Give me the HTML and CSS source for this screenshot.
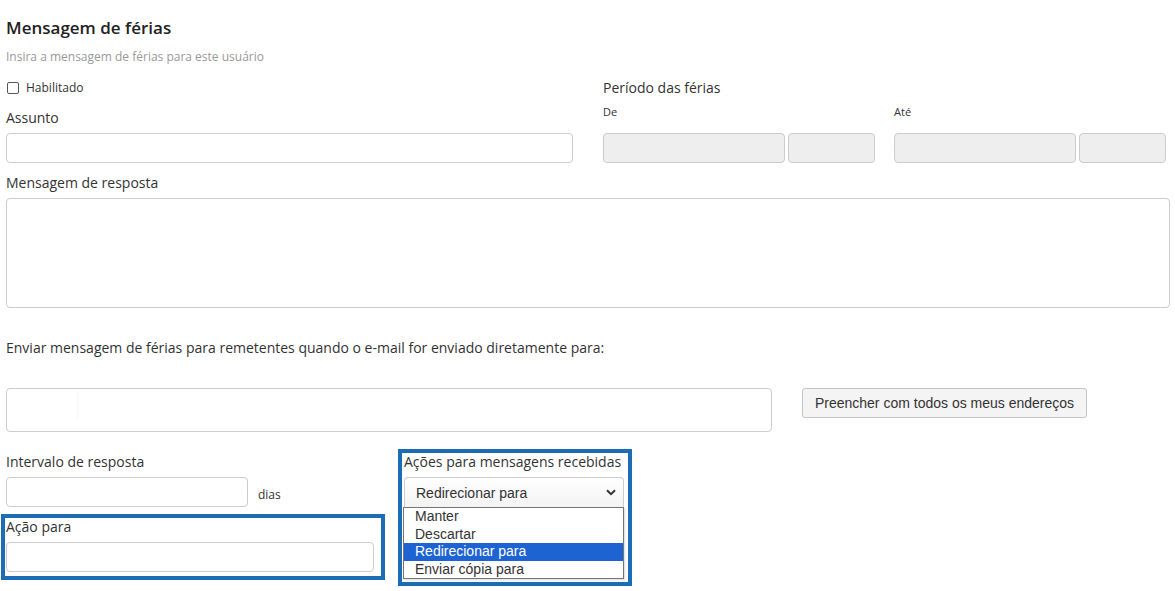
FILE: index.html
```html
<!DOCTYPE html>
<html lang="pt">
<head>
<meta charset="utf-8">
<title>Mensagem de férias</title>
<link rel="stylesheet" href="styles.css">
</head>
<body>
<div class="page">
  <h2 class="title">Mensagem de férias</h2>
  <p class="subtitle">Insira a mensagem de férias para este usuário</p>

  <div class="top-grid">
    <div class="col-left">
      <label class="check-row"><input type="checkbox" class="check"><span>Habilitado</span></label>
      <div class="label mt10">Assunto</div>
      <input class="field subject" type="text">
    </div>
    <div class="col-right">
      <div class="label">Período das férias</div>
      <div class="dates">
        <div class="date-group">
          <div class="small-label">De</div>
          <div class="date-inputs">
            <input class="field disabled date" type="text" disabled>
            <input class="field disabled time" type="text" disabled>
          </div>
        </div>
        <div class="date-group">
          <div class="small-label">Até</div>
          <div class="date-inputs">
            <input class="field disabled date" type="text" disabled>
            <input class="field disabled time" type="text" disabled>
          </div>
        </div>
      </div>
    </div>
  </div>

  <div class="label mt10">Mensagem de resposta</div>
  <textarea class="field message"></textarea>

  <div class="label send-label">Enviar mensagem de férias para remetentes quando o e-mail for enviado diretamente para:</div>
  <div class="address-row">
    <div class="field tags"><span class="tag-input"></span></div>
    <button class="fill-btn" type="button">Preencher com todos os meus endereços</button>
  </div>

  <div class="bottom-row">
    <div class="col-bottom-left">
      <div class="label interval-label">Intervalo de resposta</div>
      <div class="interval-row">
        <input class="field interval" type="text">
        <span class="unit">dias</span>
      </div>
      <div class="highlight action-box">
        <div class="label">Ação para</div>
        <input class="field action-input" type="text">
      </div>
    </div>
    <div class="highlight actions-box">
      <div class="label">Ações para mensagens recebidas</div>
      <div class="select">
        <span>Redirecionar para</span>
        <svg class="chev" width="10" height="7" viewBox="0 0 10 7"><path d="M1 1.2 L5 5.2 L9 1.2" fill="none" stroke="#333" stroke-width="2"/></svg>
      </div>
      <ul class="options">
        <li>Manter</li>
        <li>Descartar</li>
        <li class="selected">Redirecionar para</li>
        <li>Enviar cópia para</li>
      </ul>
    </div>
  </div>
</div>
</body>
</html>
```

FILE: styles.css
```css
* { box-sizing: border-box; }
html, body { margin: 0; padding: 0; background: #fff; }
body {
  font-family: "Open Sans", "Liberation Sans", sans-serif;
  color: #333;
}
.page {
  padding: 16px 5px 0 6px;
  width: 1175px;
}
.title {
  margin: 0;
  font-size: 17px;
  line-height: 24px;
  font-weight: 600;
  color: #222;
}
.subtitle {
  margin: 8px 0 0;
  font-size: 12px;
  line-height: 18px;
  color: #999;
}
.top-grid {
  display: grid;
  grid-template-columns: 567px 563px;
  column-gap: 30px;
  margin-top: 12px;
}
.col-left, .col-right { display: flex; flex-direction: column; }
.check-row {
  display: flex;
  align-items: center;
  gap: 7px;
  height: 19px;
  font-size: 12px;
  color: #333;
  padding-left: 1px;
}
.check {
  appearance: none;
  -webkit-appearance: none;
  width: 12px;
  height: 12px;
  margin: 0;
  border: 1px solid #555;
  border-radius: 2px;
  background: #fff;
}
.label {
  font-size: 14px;
  line-height: 20px;
  color: #333;
}
.mt10 { margin-top: 10px; }
.check-row + .label { margin-top: 11px; }
.field {
  display: block;
  border: 1px solid #ccc;
  border-radius: 4px;
  background: #fff;
  height: 30px;
  margin: 0;
  font: inherit;
}
.subject { width: 567px; margin-top: 5px; }
.dates {
  display: flex;
  gap: 19px;
  margin-top: 6px;
}
.date-group { width: 272px; }
.small-label {
  font-size: 11px;
  line-height: 16px;
  color: #333;
}
.date-inputs {
  display: flex;
  gap: 3px;
  margin-top: 13px;
}
.field.disabled { background: #eee; }
.date { width: 182px; }
.time { width: 87px; }
.message {
  width: 1164px;
  height: 110px;
  margin-top: 5px;
  resize: none;
}
.send-label { margin-top: 30px; }
.address-row {
  display: flex;
  align-items: flex-start;
  gap: 30px;
  margin-top: 30px;
}
.tags {
  width: 766px;
  height: 44px;
  padding: 1px 0 0 0;
}
.tag-input {
  display: block;
  width: 71px;
  height: 31px;
  border-right: 1px solid #f8f8f8;
  border-radius: 4px 0 0 0;
}
.fill-btn {
  height: 30px;
  width: 285px;
  padding: 0;
  border: 1px solid #c4c4c4;
  border-radius: 3px;
  background: #f4f4f4;
  color: #333;
  font-family: "Liberation Sans", Arial, sans-serif;
  font-size: 14px;
  white-space: nowrap;
  text-align: center;
}
.bottom-row {
  display: flex;
  align-items: flex-start;
  gap: 13px;
  margin-top: 17px;
}
.col-bottom-left {
  width: 379px;
  display: flex;
  flex-direction: column;
}
.interval-label { margin-top: 3px; }
.interval-row {
  display: flex;
  align-items: flex-end;
  gap: 10px;
  margin-top: 5px;
}
.interval { width: 242px; }
.unit {
  font-size: 12px;
  line-height: 18px;
  color: #333;
  padding-bottom: 3px;
}
.highlight {
  border: 4px solid #1c6db6;
}
.action-box {
  margin-top: 7px;
  margin-left: -5px;
  width: 384px;
  padding: 0 7px 4px 1px;
}
.action-box .label { line-height: 18px; }
.action-input { width: 368px; margin-top: 6px; }
.actions-box {
  width: 234px;
  padding: 0 4px 3px 2px;
}
.actions-box .label { line-height: 18px; }
.select {
  display: flex;
  align-items: center;
  justify-content: space-between;
  width: 220px;
  height: 30px;
  margin-top: 6px;
  padding: 0 7px 0 11px;
  border: 1px solid #ccc;
  border-bottom: none;
  border-radius: 4px 4px 0 0;
  background: linear-gradient(#ffffff, #f3f3f3);
  font-family: "Liberation Sans", Arial, sans-serif;
  font-size: 14px;
  color: #333;
}
.options {
  list-style: none;
  margin: 0 0 0 -1px;
  padding: 0;
  width: 221px;
  border: 1px solid #767676;
  box-shadow: 1px 1px 2px rgba(0,0,0,0.15);
  font-family: "Liberation Sans", Arial, sans-serif;
  font-size: 14px;
  color: #333;
  background: #fff;
}
.options li {
  height: 17.5px;
  line-height: 17.5px;
  padding-left: 11px;
}
.options li.selected {
  background: #1d63d2;
  color: #fff;
}
```
